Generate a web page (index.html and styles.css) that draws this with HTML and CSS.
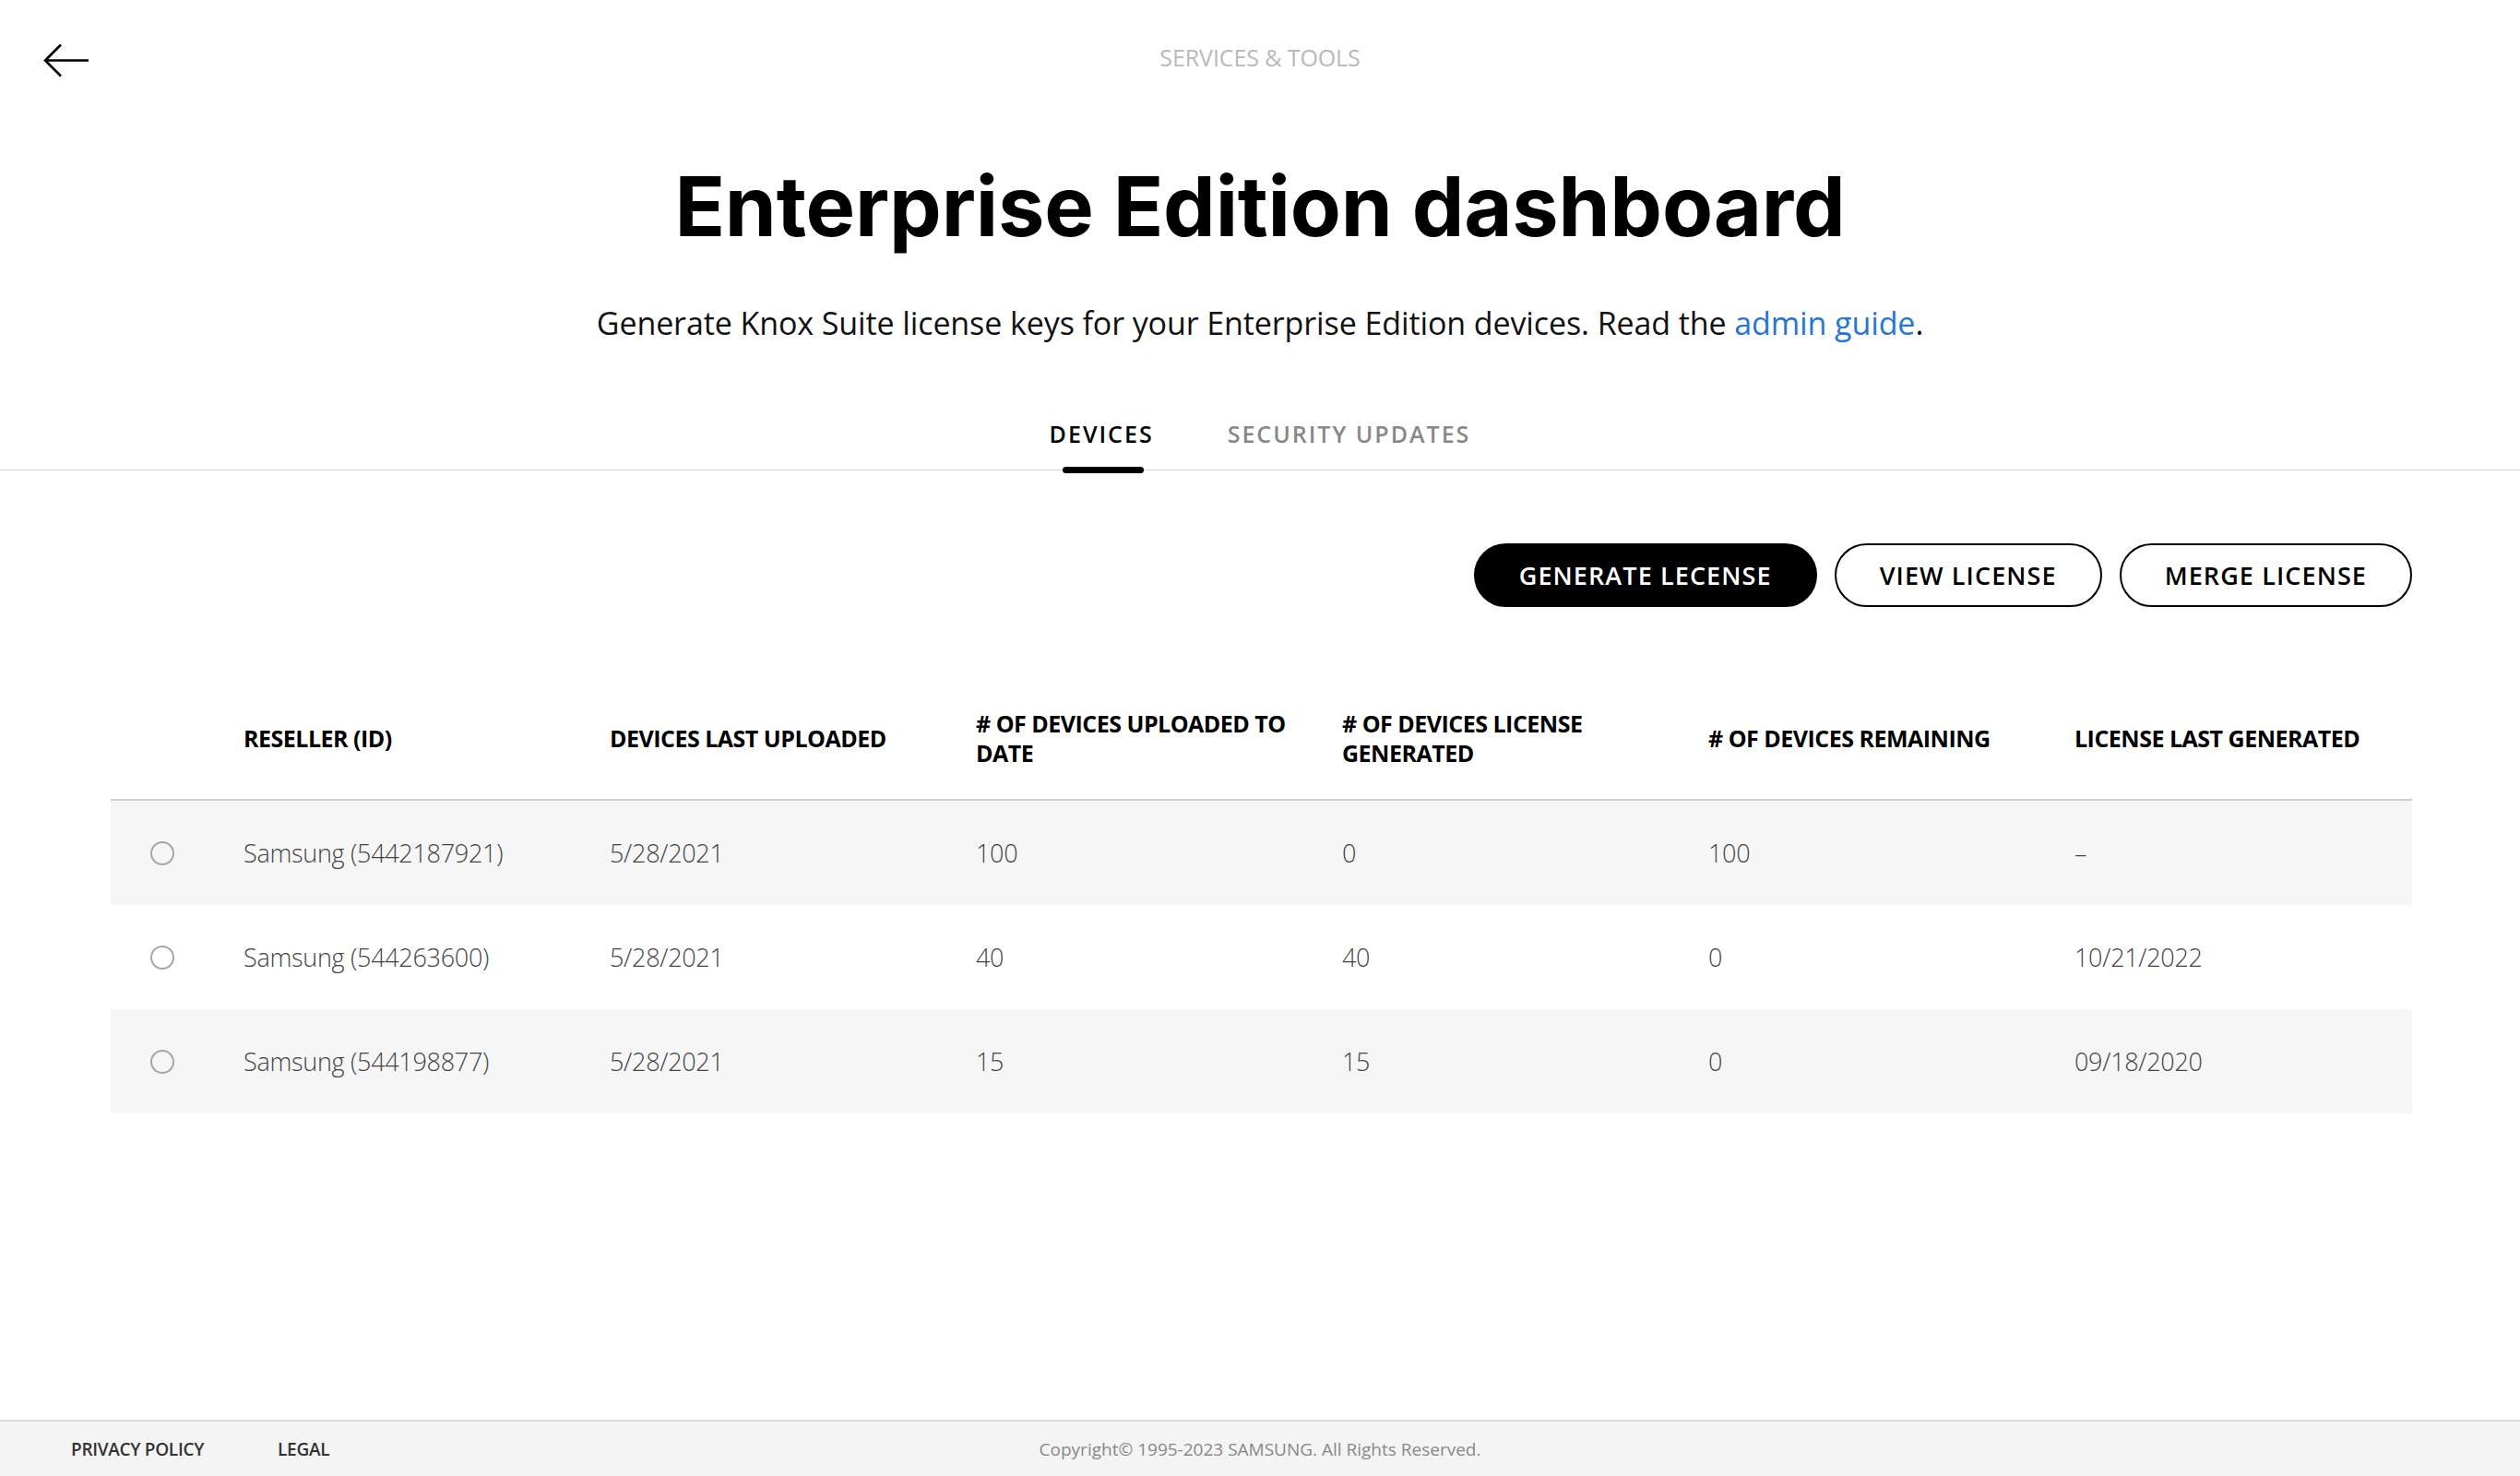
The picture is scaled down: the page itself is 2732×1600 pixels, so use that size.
FILE: index.html
```html
<!DOCTYPE html>
<html lang="en">
<head>
<meta charset="utf-8">
<title>Enterprise Edition dashboard</title>
<link rel="stylesheet" href="styles.css">
</head>
<body>
<div class="page">
  <header class="topbar">
    <a class="back" href="#" aria-label="Back">
      <svg width="52" height="40" viewBox="0 0 52 40"><path d="M50 19.5 H3 M20 2.5 L3 19.5 L20 36.5" fill="none" stroke="#000" stroke-width="2.6"/></svg>
    </a>
    <div class="crumb">SERVICES &amp; TOOLS</div>
    <div></div>
  </header>

  <main class="main">
    <h1 class="title">Enterprise Edition dashboard</h1>
    <p class="lead">Generate Knox Suite license keys for your Enterprise Edition devices. Read the <a href="#">admin guide</a>.</p>

    <nav class="tabs">
      <a class="tab active" href="#">DEVICES</a>
      <a class="tab" href="#">SECURITY UPDATES</a>
    </nav>

    <section class="content">
      <div class="actions">
        <button class="btn btn-primary">GENERATE LECENSE</button>
        <button class="btn">VIEW LICENSE</button>
        <button class="btn">MERGE LICENSE</button>
      </div>

      <div class="table">
        <div class="row head">
          <div class="cell"></div>
          <div class="cell">RESELLER (ID)</div>
          <div class="cell">DEVICES LAST UPLOADED</div>
          <div class="cell"># OF DEVICES UPLOADED TO DATE</div>
          <div class="cell"># OF DEVICES LICENSE GENERATED</div>
          <div class="cell"># OF DEVICES REMAINING</div>
          <div class="cell">LICENSE LAST GENERATED</div>
        </div>
        <div class="row shade">
          <div class="cell"><span class="radio"></span></div>
          <div class="cell">Samsung (5442187921)</div>
          <div class="cell">5/28/2021</div>
          <div class="cell">100</div>
          <div class="cell">0</div>
          <div class="cell">100</div>
          <div class="cell">–</div>
        </div>
        <div class="row">
          <div class="cell"><span class="radio"></span></div>
          <div class="cell">Samsung (544263600)</div>
          <div class="cell">5/28/2021</div>
          <div class="cell">40</div>
          <div class="cell">40</div>
          <div class="cell">0</div>
          <div class="cell">10/21/2022</div>
        </div>
        <div class="row shade">
          <div class="cell"><span class="radio"></span></div>
          <div class="cell">Samsung (544198877)</div>
          <div class="cell">5/28/2021</div>
          <div class="cell">15</div>
          <div class="cell">15</div>
          <div class="cell">0</div>
          <div class="cell">09/18/2020</div>
        </div>
      </div>
    </section>
  </main>

  <footer class="footer">
    <div class="footer-links">
      <a href="#">PRIVACY POLICY</a>
      <a href="#">LEGAL</a>
    </div>
    <div class="copyright">Copyright© 1995-2023 SAMSUNG. All Rights Reserved.</div>
    <div></div>
  </footer>
</div>
</body>
</html>
```

FILE: styles.css
```css
* { box-sizing: border-box; }

html, body {
  margin: 0;
  padding: 0;
  background: #fff;
  color: #000;
  font-family: "Open Sans", "Noto Sans", sans-serif;
}

a { color: inherit; text-decoration: none; }

.page {
  min-height: 100vh;
  display: flex;
  flex-direction: column;
}

/* top bar */
.topbar {
  display: grid;
  grid-template-columns: 1fr auto 1fr;
  align-items: center;
  height: 130px;
  padding: 0 46px;
}
.back { display: flex; align-items: center; margin-top: 2px; }
.back svg { display: block; }
.crumb {
  font-size: 25px;
  color: #b9b9b9;
  letter-spacing: -0.1px;
  margin-top: -6px;
}

/* main */
.main { flex: 1; }

.title {
  margin: 0;
  padding-top: 40px;
  text-align: center;
  font-family: "Inter", sans-serif;
  font-weight: 700;
  font-size: 90px;
  line-height: 108px;
  letter-spacing: -0.2px;
}

.lead {
  margin: 48px 0 0;
  text-align: center;
  font-size: 34px;
  line-height: 48px;
  letter-spacing: -0.1px;
  color: #111;
}
.lead a { color: #2676d8; }

/* tabs */
.tabs {
  margin-top: 81px;
  display: flex;
  justify-content: center;
  gap: 80px;
  border-bottom: 1px solid #d6d6d6;
}
.tab {
  position: relative;
  font-size: 25px;
  font-weight: 600;
  line-height: 30px;
  letter-spacing: 2px;
  color: #888;
  padding-bottom: 24px;
}
.tab.active { color: #000; }
.tab.active::after {
  content: "";
  position: absolute;
  left: 50%;
  bottom: -4px;
  width: 88px;
  height: 7px;
  margin-left: -42px;
  border-radius: 4px;
  background: #000;
}

/* content */
.content {
  padding: 0 117px 0 120px;
}
.actions {
  margin-top: 79px;
  display: flex;
  justify-content: flex-end;
  gap: 19px;
}
.btn {
  height: 69px;
  padding: 0 47px;
  border: 2px solid #000;
  border-radius: 35px;
  background: #fff;
  color: #000;
  font-family: "Open Sans", sans-serif;
  font-size: 27px;
  font-weight: 600;
  letter-spacing: 1.1px;
  cursor: pointer;
}
.btn-primary { background: #000; color: #fff; }

/* table */
.table { margin-top: 68px; }
.row {
  display: grid;
  grid-template-columns: 144px repeat(5, 397px) 1fr;
  align-items: center;
  height: 113px;
  font-size: 27px;
  font-weight: 300;
  color: #444;
  letter-spacing: -0.3px;
}
.row.shade { background: #f6f6f6; }
.row.head {
  height: 142px;
  padding-top: 8px;
  border-bottom: 2px solid #cfcfcf;
  font-size: 25px;
  font-weight: 700;
  line-height: 32px;
  color: #000;
  letter-spacing: -0.5px;
}
.row.head .cell { padding-right: 44px; }
.radio {
  display: block;
  width: 26px;
  height: 26px;
  margin-left: 43px;
  border: 2px solid #a6a6a6;
  border-radius: 50%;
}

/* footer */
.footer {
  display: grid;
  grid-template-columns: 1fr auto 1fr;
  align-items: center;
  height: 61px;
  padding: 0 77px;
  background: #f4f4f4;
  border-top: 2px solid #dcdcdc;
}
.footer-links {
  display: flex;
  gap: 80px;
  font-size: 19px;
  font-weight: 600;
  color: #333;
  letter-spacing: -0.3px;
}
.copyright {
  font-size: 19px;
  color: #888;
  letter-spacing: 0;
}
```
